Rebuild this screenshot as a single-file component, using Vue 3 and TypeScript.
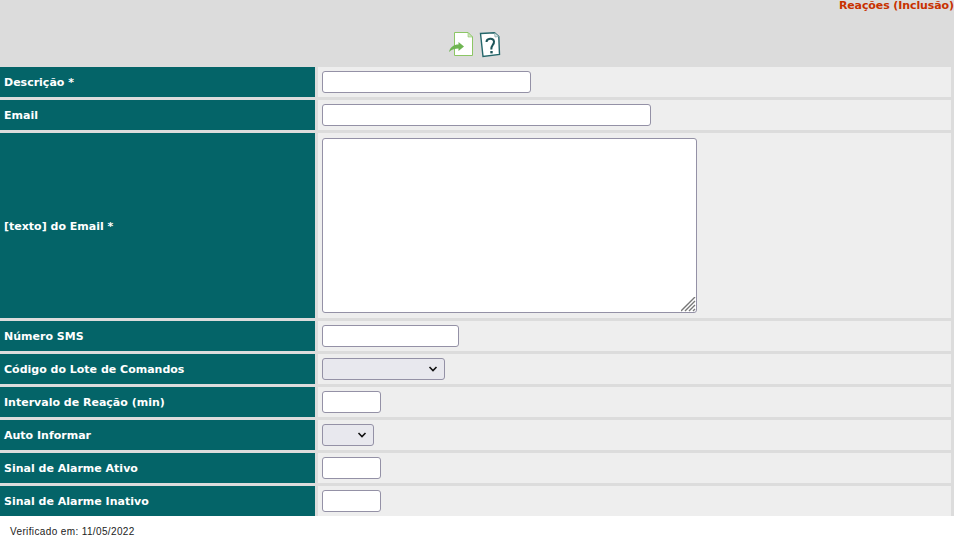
<script setup lang="ts">
interface Field {
  label: string;
  kind: 'input' | 'select' | 'textarea';
  size: string;
}

const fields: Field[] = [
  { label: 'Descrição *', kind: 'input', size: 'w-desc' },
  { label: 'Email', kind: 'input', size: 'w-email' },
  { label: '[texto] do Email *', kind: 'textarea', size: 'w-text' },
  { label: 'Número SMS', kind: 'input', size: 'w-sms' },
  { label: 'Código do Lote de Comandos', kind: 'select', size: 'w-lote' },
  { label: 'Intervalo de Reação (min)', kind: 'input', size: 'w-num' },
  { label: 'Auto Informar', kind: 'select', size: 'w-auto' },
  { label: 'Sinal de Alarme Ativo', kind: 'input', size: 'w-num' },
  { label: 'Sinal de Alarme Inativo', kind: 'input', size: 'w-num' },
];
</script>

<template>
  <div class="page">
    <header class="head">
      <div class="title">Reações (Inclusão)</div>
      <div class="tools">
        <svg width="25" height="25" viewBox="0 0 25 25">
          <path d="M5.500 .5H19L23.500 5V23.500H5.500Z" fill="#fff" stroke="#8cc665" />
          <path d="M19 .5V5H23.500Z" fill="#cfe6bd" stroke="#8cc665" stroke-width=".6" />
          <path d="M0 20C1 15 5 12.500 9.500 12.500V10L15 14.500 9.500 19V16.500C6 16.500 3 17 0 20Z" fill="#6fb552" />
        </svg>
        <svg width="23" height="26" viewBox="0 0 23 26">
          <path d="M2.500 1.500L16.500 .8 20.800 4.500 21.500 22.500 5 24.500Z" fill="#fff" stroke="#24666a" stroke-width="1.400" />
          <path d="M16.500 .8L17 5 20.800 4.500" fill="#d7e4e4" stroke="#7fa3a5" stroke-width=".7" />
          <path d="M8.500 10C8.500 6 15.500 5.500 16 9.500 16.300 13 13 13 13.300 17.500" fill="none" stroke="#1d5559" stroke-width="2" />
          <rect x="12.300" y="19" width="2.400" height="2.400" fill="#1d5559" />
        </svg>
      </div>
    </header>

    <form class="rows">
      <div v-for="field in fields" :key="field.label" class="row" :class="{ 'row--tall': field.kind === 'textarea' }">
        <label class="label">{{ field.label }}</label>
        <div class="value">
          <textarea v-if="field.kind === 'textarea'" class="control" :class="field.size"></textarea>
          <select v-else-if="field.kind === 'select'" class="control" :class="field.size"></select>
          <input v-else type="text" class="control" :class="field.size" />
        </div>
      </div>
    </form>

    <footer class="foot">Verificado em: 11/05/2022</footer>
  </div>
</template>

<style scoped>
.page {
  width: 954px;
  height: 546px;
  overflow: hidden;
  background: #fff;
  font-family: "DejaVu Sans", Verdana, sans-serif;
}

.head {
  height: 67px;
  background: #dcdcdc;
  display: flex;
  flex-direction: column;
}

.title {
  height: 32px;
  text-align: right;
  color: #c83200;
  font-size: 11px;
  font-weight: 700;
  line-height: 12px;
  letter-spacing: -.1px;
}

.tools {
  display: flex;
  justify-content: center;
  align-items: flex-start;
  gap: 4px;
  width: 950px;
}

.rows {
  display: flex;
  flex-direction: column;
  gap: 3px;
  background: #dcdcdc;
  padding-right: 3px;
}

.row {
  display: grid;
  grid-template-columns: 315px 1fr;
  column-gap: 3px;
  height: 30px;
}

.row--tall {
  height: 185px;
}

.row--tall .label {
  padding-top: 2px;
}

.label {
  background: #046468;
  color: #fff;
  font-size: 11px;
  font-weight: 700;
  padding-left: 4px;
  display: flex;
  align-items: center;
}

.value {
  background: #eeeeee;
  padding-left: 4px;
  display: flex;
  align-items: center;
}

.control {
  box-sizing: border-box;
  height: 22px;
  margin: 0;
  padding: 1px 2px;
  border: 1px solid #9491a6;
  border-radius: 3px;
  background: #fff;
  font-size: 13px;
  outline: none;
}

select.control {
  appearance: none;
  background: #e8e8ee url("data:image/svg+xml,%3Csvg xmlns='http://www.w3.org/2000/svg' width='10' height='6'%3E%3Cpath d='M1.500 1l3.500 3.500L8.500 1' fill='none' stroke='%23111' stroke-width='1.600'/%3E%3C/svg%3E") no-repeat right 6px center;
}

textarea.control {
  height: 175px;
}

textarea.control::-webkit-resizer {
  background: url("data:image/svg+xml,%3Csvg xmlns='http://www.w3.org/2000/svg' width='15' height='15'%3E%3Cpath d='M14 0L0 14M14 4L4 14M14 8L8 14M14 12L12 14' stroke='%23777' stroke-width='1.400'/%3E%3C/svg%3E") no-repeat;
}

.w-desc { width: 209px; }
.w-email { width: 329px; }
.w-text { width: 375px; }
.w-sms { width: 137px; }
.w-lote { width: 123px; }
.w-num { width: 59px; }
.w-auto { width: 52px; }

.foot {
  padding: 10px 0 0 10px;
  font-family: "Liberation Sans", Arial, sans-serif;
  font-size: 10px;
  letter-spacing: .37px;
  color: #222;
}
</style>
